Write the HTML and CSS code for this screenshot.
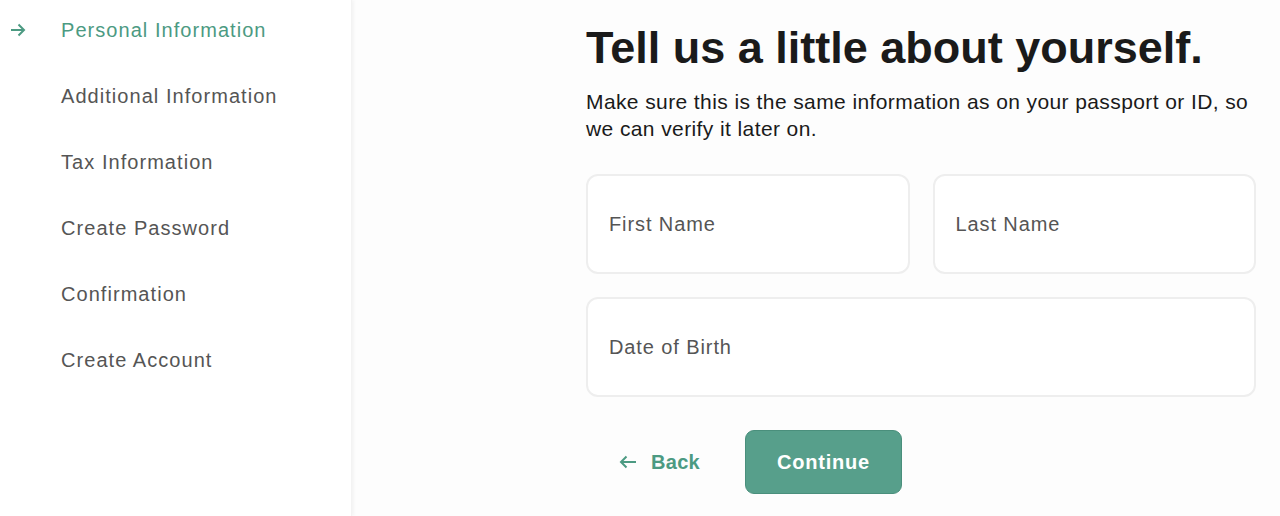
FILE: index.html
```html
<!DOCTYPE html>
<html lang="en">
<head>
    <meta charset="UTF-8">
    <meta name="viewport" content="width=device-width, initial-scale=1.0">
    <title>Tell us about yourself</title>
    <link rel="stylesheet" href="styles.css">
</head>
<body>
    <div class="page">
        <nav class="steps">
            <a class="step active" href="#">
                <svg class="step-arrow" width="16" height="14" viewBox="0 0 16 14"><path d="M1 7h13M8.5 1.5L14 7l-5.5 5.5" fill="none" stroke="currentColor" stroke-width="2"/></svg>
                Personal Information
            </a>
            <a class="step" href="#">Additional Information</a>
            <a class="step" href="#">Tax Information</a>
            <a class="step" href="#">Create Password</a>
            <a class="step" href="#">Confirmation</a>
            <a class="step" href="#">Create Account</a>
        </nav>

        <main class="content">
            <h1>Tell us a little about yourself.</h1>
            <p class="lead">Make sure this is the same information as on your passport or ID, so we can verify it later on.</p>

            <form class="form">
                <div class="row">
                    <input type="text" placeholder="First Name">
                    <input type="text" placeholder="Last Name">
                </div>
                <div class="row">
                    <input type="text" placeholder="Date of Birth">
                </div>
                <div class="actions">
                    <button type="button" class="back">
                        <svg width="18" height="14" viewBox="0 0 18 14"><path d="M17 7H2M7.5 1.5L2 7l5.5 5.5" fill="none" stroke="currentColor" stroke-width="2"/></svg>
                        Back
                    </button>
                    <button type="button" class="continue">Continue</button>
                </div>
            </form>
        </main>
    </div>
</body>
</html>
```

FILE: styles.css
```css
body {
    margin: 0;
    font-family: "Liberation Sans", Arial, sans-serif;
    background-color: #fdfdfd;
    color: #1a1a1a;
}
.page {
    display: flex;
    min-height: 516px;
}
.steps {
    width: 352px;
    background-color: #fff;
    box-shadow: 2px 0 3px rgba(0, 0, 0, 0.04);
    border-right: 1px solid #f3f3f3;
    display: flex;
    flex-direction: column;
    padding-top: 17px;
    box-sizing: border-box;
}
.step {
    position: relative;
    display: block;
    padding-left: 61px;
    height: 66px;
    font-size: 20px;
    line-height: 26px;
    color: #555;
    text-decoration: none;
    letter-spacing: 1.05px;
}
.step.active {
    color: #4c9a82;
}
.step-arrow {
    position: absolute;
    left: 10px;
    top: 6px;
}
.content {
    padding-left: 234px;
    padding-top: 22px;
    width: 670px;
}
h1 {
    font-size: 45px;
    font-weight: bold;
    margin: 0;
    line-height: 52px;
    color: #1a1a1a;
}
.lead {
    font-size: 21px;
    line-height: 27px;
    letter-spacing: 0.4px;
    margin: 14px 0 0;
}
.form {
    margin-top: 32px;
    display: flex;
    flex-direction: column;
    gap: 23px;
}
.row {
    display: flex;
    gap: 23px;
}
input {
    flex: 1;
    min-width: 0;
    height: 100px;
    box-sizing: border-box;
    border: 2px solid #eee;
    border-radius: 12px;
    padding: 0 21px;
    font-family: inherit;
    font-size: 20px;
    letter-spacing: 0.9px;
    background-color: #fff;
    outline: none;
}
input::placeholder {
    color: #555;
}
.actions {
    display: flex;
    align-items: center;
    gap: 45px;
    margin-top: 10px;
    padding-left: 33px;
}
button {
    font-family: inherit;
    font-size: 20px;
    font-weight: bold;
    cursor: pointer;
}
.back {
    display: flex;
    align-items: center;
    gap: 14px;
    border: none;
    background: none;
    color: #4c9a82;
    padding: 0;
    letter-spacing: 0.3px;
}
.continue {
    width: 157px;
    height: 64px;
    border-radius: 9px;
    border: 1px solid #4a8f7c;
    background-color: #579f8b;
    color: #fff;
    letter-spacing: 0.8px;
}
```
